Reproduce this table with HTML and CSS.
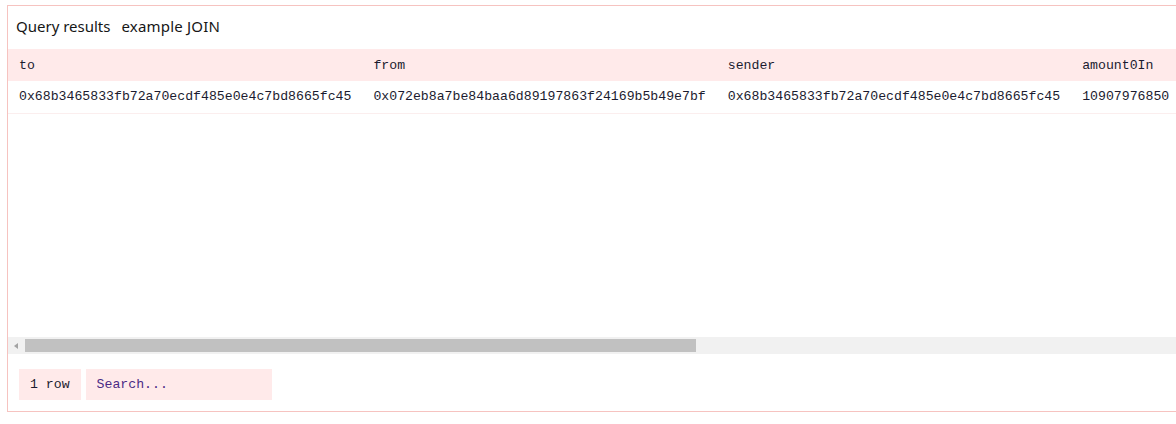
FILE: index.html
```html
<!DOCTYPE html>
<html lang="en">
<head>
    <meta charset="UTF-8">
    <title>Query results</title>
    <link rel="stylesheet" href="styles.css">
</head>
<body>
    <div class="results-panel">
        <div class="panel-title">
            <span class="title-main">Query results</span>
            <span class="title-query">example JOIN</span>
        </div>

        <div class="table-area">
            <table class="results-table">
                <thead>
                    <tr>
                        <th>to</th>
                        <th>from</th>
                        <th>sender</th>
                        <th>amount0In</th>
                    </tr>
                </thead>
                <tbody>
                    <tr>
                        <td>0x68b3465833fb72a70ecdf485e0e4c7bd8665fc45</td>
                        <td>0x072eb8a7be84baa6d89197863f24169b5b49e7bf</td>
                        <td>0x68b3465833fb72a70ecdf485e0e4c7bd8665fc45</td>
                        <td>10907976850</td>
                    </tr>
                </tbody>
            </table>
        </div>

        <div class="hscroll">
            <div class="hscroll-arrow"></div>
            <div class="hscroll-thumb"></div>
        </div>

        <div class="panel-footer">
            <div class="row-count">1 row</div>
            <input class="search-box" type="text" placeholder="Search...">
        </div>
    </div>
</body>
</html>
```

FILE: styles.css
```css
* {
    margin: 0;
    padding: 0;
    box-sizing: border-box;
}

html, body {
    width: 100%;
    height: 100%;
    overflow: hidden;
    background: #fff;
}

body {
    padding: 5px 0 0 7px;
    color: #1b1b2f;
}

/* panel runs on past the right edge of the window */
.results-panel {
    width: calc(100% + 1px);
    height: 407px;
    border: 1px solid #f6c3c0;
    display: flex;
    flex-direction: column;
    overflow: hidden;
}

.panel-title {
    height: 43px;
    flex-shrink: 0;
    padding: 0 8px 3px;
    display: flex;
    align-items: center;
    gap: 11px;
    font-family: "Noto Sans", "Open Sans", sans-serif;
    font-size: 15px;
    color: #161616;
}

.title-query {
    letter-spacing: 0.2px;
}

.table-area {
    height: 288px;
    flex-shrink: 0;
    overflow: hidden;
}

.results-table {
    border-collapse: collapse;
    font-family: "Liberation Mono", "DejaVu Sans Mono", monospace;
    font-size: 13.2px;
    white-space: nowrap;
}

.results-table th,
.results-table td {
    text-align: left;
    padding: 0 11px;
    font-weight: normal;
}

.results-table th {
    height: 32px;
    background: #ffeaea;
}

.results-table td {
    height: 32px;
    border-bottom: 1px solid #fbeeee;
}

.hscroll {
    height: 17px;
    flex-shrink: 0;
    background: #f1f1f1;
    display: flex;
    align-items: center;
    padding-left: 4px;
}

.hscroll-arrow {
    width: 0;
    height: 0;
    border-top: 3px solid transparent;
    border-bottom: 3px solid transparent;
    border-right: 4px solid #a3a3a3;
    margin-left: 2px;
    margin-right: 7px;
}

.hscroll-thumb {
    width: 671px;
    height: 13px;
    background: #c1c1c1;
}

.panel-footer {
    display: flex;
    gap: 5px;
    padding: 15px 11px 0;
    font-family: "Liberation Mono", "DejaVu Sans Mono", monospace;
    font-size: 13.2px;
}

.row-count {
    height: 31px;
    padding: 0 11px;
    display: flex;
    align-items: center;
    background: #ffeaea;
    color: #1b1b2f;
}

.search-box {
    width: 186px;
    height: 31px;
    padding: 0 11px;
    border: none;
    outline: none;
    background: #ffeaea;
    font-family: inherit;
    font-size: 13.2px;
    color: #1b1b2f;
}

.search-box::placeholder {
    color: #4b2a85;
}
```
